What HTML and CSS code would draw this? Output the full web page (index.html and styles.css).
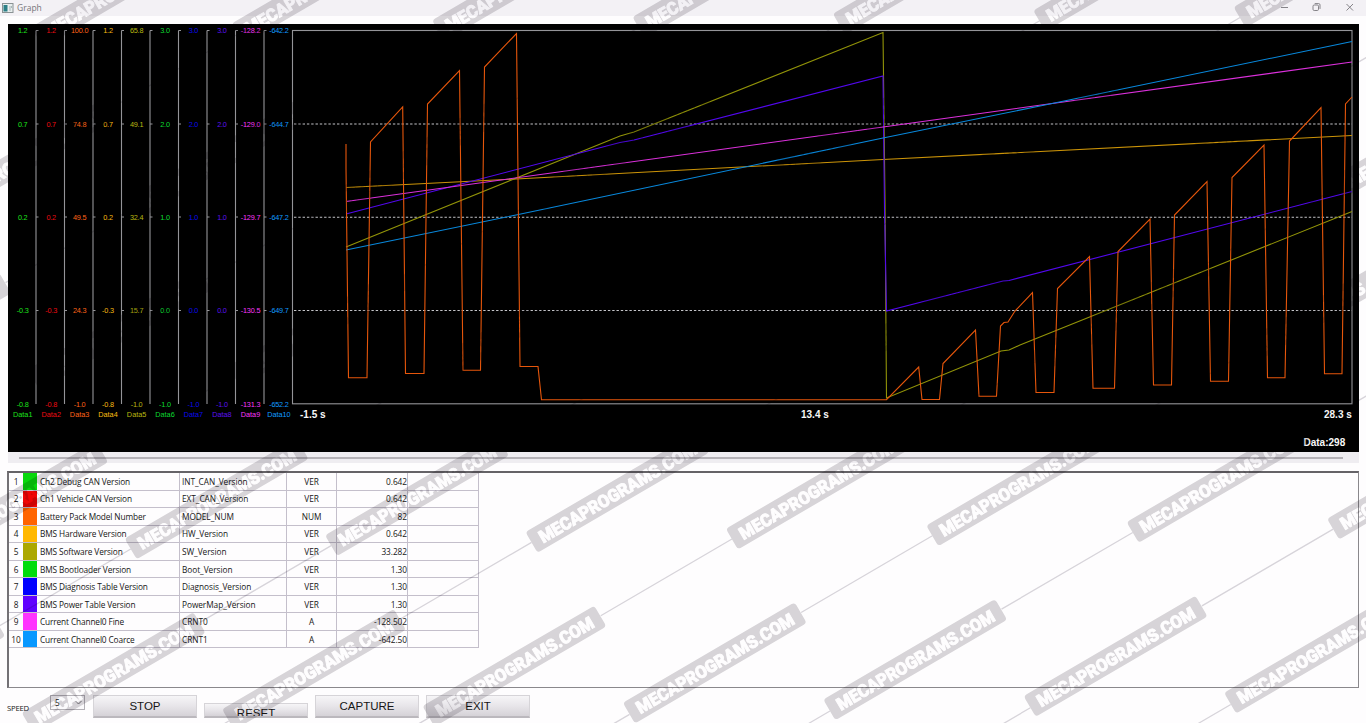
FILE: index.html
```html
<!DOCTYPE html>
<html lang="en">
<head>
<meta charset="utf-8">
<title>Graph</title>
<link rel="stylesheet" href="styles.css">
</head>
<body>
<div class="window">
  <header class="titlebar">
    <svg class="app-icon" width="12" height="11" viewBox="0 0 12 11"><rect x=".5" y=".5" width="10.5" height="9" fill="#e8eeee" stroke="#8a9294"/><rect x="1.5" y="2" width="4" height="6.5" fill="#2c7f86"/><path d="M8 3v5M9.5 3v2" stroke="#a9b8ba"/></svg>
    <span class="title">Graph</span>
    <svg class="controls" width="80" height="14" viewBox="0 0 80 14" fill="none" stroke="#858388"><path d="M0 6.500h7"/><rect x="32" y="4" width="5.5" height="5.5" rx="1.2"/><path d="M33.7 2.600h4q1.3 0 1.3 1.3v4"/><path d="M65.500 3l6.500 6.500M72 3l-6.500 6.500"/></svg>
  </header>

  <svg class="chart" width="1351" height="428" viewBox="8 24 1351 428">
    <g class="axes">
      <path d="M36 30.500V404M64.500 30.500V404M93 30.500V404M121.500 30.500V404M150 30.500V404M178.500 30.500V404M207 30.500V404M235.500 30.500V404M264 30.500V404"/>
      <path class="ticks" d="M36 30.500h2.500M64.500 30.500h2.500M93 30.500h2.500M121.500 30.500h2.500M150 30.500h2.500M178.500 30.500h2.500M207 30.500h2.500M235.500 30.500h2.500M264 30.500h2.500M36 124h2.500M64.500 124h2.500M93 124h2.500M121.500 124h2.500M150 124h2.500M178.500 124h2.500M207 124h2.500M235.500 124h2.500M264 124h2.500M36 217h2.500M64.500 217h2.500M93 217h2.500M121.500 217h2.500M150 217h2.500M178.500 217h2.500M207 217h2.500M235.500 217h2.500M264 217h2.500M36 310.500h2.500M64.500 310.500h2.500M93 310.500h2.500M121.500 310.500h2.500M150 310.500h2.500M178.500 310.500h2.500M207 310.500h2.500M235.500 310.500h2.500M264 310.500h2.500"/>
      <rect x="292.500" y="30.500" width="1059.500" height="373.300"/>
    </g>
    <path class="grid" d="M294 124H1352M294 217.200H1352M294 310.500H1352"/>
    <g class="scale">
      <g class="d1" transform="translate(22.700)"><text y="33">1.2</text><text y="126.500">0.7</text><text y="219.700">0.2</text><text y="313">-0.3</text><text y="406.500">-0.8</text><text class="name" y="417.300">Data1</text></g>
      <g class="d2" transform="translate(51.200)"><text y="33">1.2</text><text y="126.500">0.7</text><text y="219.700">0.2</text><text y="313">-0.3</text><text y="406.500">-0.8</text><text class="name" y="417.300">Data2</text></g>
      <g class="d3" transform="translate(79.600)"><text y="33">100.0</text><text y="126.500">74.8</text><text y="219.700">49.5</text><text y="313">24.3</text><text y="406.500">-1.0</text><text class="name" y="417.300">Data3</text></g>
      <g class="d4" transform="translate(108)"><text y="33">1.2</text><text y="126.500">0.7</text><text y="219.700">0.2</text><text y="313">-0.3</text><text y="406.500">-0.8</text><text class="name" y="417.300">Data4</text></g>
      <g class="d5" transform="translate(136.600)"><text y="33">65.8</text><text y="126.500">49.1</text><text y="219.700">32.4</text><text y="313">15.7</text><text y="406.500">-1.0</text><text class="name" y="417.300">Data5</text></g>
      <g class="d6" transform="translate(165)"><text y="33">3.0</text><text y="126.500">2.0</text><text y="219.700">1.0</text><text y="313">0.0</text><text y="406.500">-1.0</text><text class="name" y="417.300">Data6</text></g>
      <g class="d7" transform="translate(193.400)"><text y="33">3.0</text><text y="126.500">2.0</text><text y="219.700">1.0</text><text y="313">0.0</text><text y="406.500">-1.0</text><text class="name" y="417.300">Data7</text></g>
      <g class="d8" transform="translate(221.900)"><text y="33">3.0</text><text y="126.500">2.0</text><text y="219.700">1.0</text><text y="313">0.0</text><text y="406.500">-1.0</text><text class="name" y="417.300">Data8</text></g>
      <g class="d9" transform="translate(250.500)"><text y="33">-128.2</text><text y="126.500">-129.0</text><text y="219.700">-129.7</text><text y="313">-130.5</text><text y="406.500">-131.3</text><text class="name" y="417.300">Data9</text></g>
      <g class="d10" transform="translate(278.900)"><text y="33">-642.2</text><text y="126.500">-644.7</text><text y="219.700">-647.2</text><text y="313">-649.7</text><text y="406.500">-652.2</text><text class="name" y="417.300">Data10</text></g>
    </g>
    <g class="lines">
      <polyline class="l4" points="346,187.500 516,179 883,159.500 1352,135.500"/>
      <polyline class="l5" points="346,247 620,136 634,132 883,32.500 885,200 886.500,398 1001,351 1009,350 1020,345 1352,211.500"/>
      <polyline class="l8" points="346,214 620,142.500 634,140 883,76 884.500,210 886.500,311 1003,281 1009,280.500 1352,191.500"/>
      <polyline class="l9" points="346,201.500 883,127 1352,62"/>
      <polyline class="l10" points="346,250 516,215 883,138 1040,106 1352,41.500"/>
      <polyline class="l3" points="346,144 346,168 348.500,377.700 367,377.700 370.500,142 402.700,107 405.500,373.500 424,373.500 427.500,104 459.500,70.500 463,370.300 480.500,370.300 484.500,67 516.500,33.500 520,366.500 538,366.500 541.500,399.700 886.500,399.700 918.700,367 922,399.500 939.500,399.500 943,363.500 975.500,330 979,396.300 996.500,396.300 1000.500,326 1004,322.500 1008,322 1015,311 1032.500,292.500 1036,392.500 1054,392.500 1057.500,288.500 1089.500,256.500 1093,388.300 1114.500,388.300 1118,251.500 1150,219 1153.500,385 1171.500,385 1174.500,215 1207,181.500 1210.500,381.300 1228.500,381.300 1232,177.500 1264,145 1267.500,377.700 1285,377.700 1289.500,141 1321,107.500 1324.500,373.700 1342,373.700 1345.500,104 1352,97"/>
    </g>
    <g class="times"><text x="300" y="418">-1.5 s</text><text x="801" y="418">13.4 s</text><text x="1324" y="418">28.3 s</text><text x="1303.500" y="446">Data:298</text></g>
  </svg>

  <div class="splitter"></div>

  <main class="panel">
    <table class="signals">
      <colgroup><col class="c-no"><col class="c-color"><col class="c-name"><col class="c-id"><col class="c-unit"><col class="c-value"><col class="c-last"></colgroup>
      <tr><td>1</td><td class="s1"></td><td>Ch2 Debug CAN Version</td><td>INT_CAN_Version</td><td>VER</td><td>0.642</td><td></td></tr>
      <tr><td>2</td><td class="s2"></td><td>Ch1 Vehicle CAN Version</td><td>EXT_CAN_Version</td><td>VER</td><td>0.642</td><td></td></tr>
      <tr><td>3</td><td class="s3"></td><td>Battery Pack Model Number</td><td>MODEL_NUM</td><td>NUM</td><td>82</td><td></td></tr>
      <tr><td>4</td><td class="s4"></td><td>BMS Hardware Version</td><td>HW_Version</td><td>VER</td><td>0.642</td><td></td></tr>
      <tr><td>5</td><td class="s5"></td><td>BMS Software Version</td><td>SW_Version</td><td>VER</td><td>33.282</td><td></td></tr>
      <tr><td>6</td><td class="s6"></td><td>BMS Bootloader Version</td><td>Boot_Version</td><td>VER</td><td>1.30</td><td></td></tr>
      <tr><td>7</td><td class="s7"></td><td>BMS Diagnosis Table Version</td><td>Diagnosis_Version</td><td>VER</td><td>1.30</td><td></td></tr>
      <tr><td>8</td><td class="s8"></td><td>BMS Power Table Version</td><td>PowerMap_Version</td><td>VER</td><td>1.30</td><td></td></tr>
      <tr><td>9</td><td class="s9"></td><td>Current Channel0 Fine</td><td>CRNT0</td><td>A</td><td>-128.502</td><td></td></tr>
      <tr><td>10</td><td class="s10"></td><td>Current Channel0 Coarce</td><td>CRNT1</td><td>A</td><td>-642.50</td><td></td></tr>
    </table>
  </main>

  <footer class="toolbar">
    <span class="speed">SPEED</span>
    <div class="select"><span>5</span><svg width="7" height="5" viewBox="0 0 7 5" fill="none" stroke="#77747a"><path d="M.5 1l3 3 3-3"/></svg></div>
    <button class="btn">STOP</button>
    <button class="btn low"><span>RESET</span></button>
    <button class="btn">CAPTURE</button>
    <button class="btn">EXIT</button>
  </footer>

  <svg class="watermark" width="1366" height="723" viewBox="0 0 1366 723">
    <defs>
      <g id="mark"><g transform="rotate(-30.300)"><path d="M100 0H252"/><rect x="-99.500" y="-12" width="199" height="24" rx="3.500"/><text x="-90" y="6.800" textLength="180" lengthAdjust="spacingAndGlyphs">MECAPROGRAMS.COM</text></g></g>
      <g id="row"><use href="#mark"/><use href="#mark" x="-200.400" y="3.300"/><use href="#mark" x="-400.800" y="6.600"/><use href="#mark" x="-601.200" y="9.900"/><use href="#mark" x="-801.600" y="13.200"/><use href="#mark" x="-1002" y="16.500"/><use href="#mark" x="-1202.400" y="19.800"/><use href="#mark" x="-1402.800" y="23.100"/></g>
    </defs>
    <use href="#row" x="1526" y="-36"/>
    <use href="#row" x="1425" y="137"/>
    <use href="#row" x="1322" y="310"/>
    <use href="#row" x="1419" y="479"/>
    <use href="#row" x="1316" y="653"/>
    <use href="#row" x="1414" y="825"/>
  </svg>
</div>
</body>
</html>
```

FILE: styles.css
```css
body { margin: 0; background: #fefdfe; overflow: hidden; }
.window { position: relative; width: 1366px; height: 723px; display: flex; flex-direction: column; font-family: "Open Sans", "Noto Sans", sans-serif; color: #161616; overflow: hidden; }
.titlebar { height: 16px; flex: none; margin-bottom: 8px; background: #f3f1f5; display: flex; align-items: center; padding-left: 2px; box-sizing: border-box; }
.title { font-size: 8.5px; color: #77757a; margin-left: 3px; line-height: 16px; }
.controls { margin-left: auto; margin-right: 5px; }
.chart { display: block; flex: none; margin-left: 8px; background: #000; font-family: "Liberation Sans", Arial, sans-serif; }
.axes { fill: none; stroke: #949498; stroke-width: 1.1; }
.grid { stroke: #c4c4c8; stroke-width: 1.1; stroke-dasharray: 2.4 1.9; }
.scale { font-size: 7.3px; text-anchor: middle; letter-spacing: -.2px; }
.scale .name { letter-spacing: 0; }
.lines { fill: none; stroke-width: 1.1; }
.l3 { stroke: #e6560b; } .l4 { stroke: #cc9408; } .l5 { stroke: #929408; }
.l8 { stroke: #5208ee; } .l9 { stroke: #dc30dc; } .l10 { stroke: #0888dc; }
.d1 { fill: #1ce01c; } .d2 { fill: #ec0c12; } .d3 { fill: #ff6418; } .d4 { fill: #f8bc10; } .d5 { fill: #b8b810; }
.d6 { fill: #0cdc30; } .d7 { fill: #0a0aec; } .d8 { fill: #5c10f0; } .d9 { fill: #f838f8; } .d10 { fill: #109cff; }
.times { fill: #f8f8f8; font-size: 10px; font-weight: bold; }
.splitter { height: 11px; flex: none; margin: 0 7px 0 8px; padding: 5px 16px 0 11px; box-sizing: border-box; background: #efedf1; }
.splitter::before { content: ""; display: block; height: 1.5px; background: #b5b2b7; }
.panel { flex: none; width: 1352px; height: 217px; box-sizing: border-box; margin: 8px 0 0 7px; border: 1px solid #8a888c; border-top: 2px solid #656367; border-left: 2px solid #737175; }
.signals { border-collapse: separate; border-spacing: 0; table-layout: fixed; width: 470px; font-size: 8.3px; line-height: 14px; letter-spacing: -.05px; }
.c-no { width: 14px; } .c-color { width: 14px; } .c-name { width: 143px; } .c-id { width: 107px; } .c-unit { width: 50px; } .c-value { width: 71px; } .c-last { width: 71px; }
.signals tr { height: 17.55px; }
.signals td { height: 15.550px; padding: 1px 0 0 2px; border: 0 solid #c4bfcb; border-right-width: 1px; border-bottom-width: 1px; white-space: nowrap; }
.signals td:nth-child(1) { padding: 1px 0 0; text-align: center; border-right: 0; }
.signals td:nth-child(2) { border-right: 0; }
.signals td:nth-child(3) { padding-left: 3px; letter-spacing: -.13px; }
.signals td:nth-child(5) { text-align: center; padding-left: 0; }
.signals td:nth-child(6) { text-align: right; }
.s1 { background: #08d80c; } .s2 { background: #f00404; } .s3 { background: #ff6400; } .s4 { background: #ffb800; } .s5 { background: #aca800; }
.s6 { background: #00dc0c; } .s7 { background: #0000ff; } .s8 { background: #6000ff; } .s9 { background: #ff34ff; } .s10 { background: #0898ff; }
.toolbar { display: flex; align-items: flex-start; padding: 7px 0 0 7px; }
.speed { width: 43px; font-size: 7.7px; letter-spacing: -.2px; line-height: 10px; margin-top: 7.5px; }
.select { width: 35px; height: 15px; box-sizing: border-box; border: 1px solid #b4b1b7; display: flex; justify-content: space-between; align-items: center; padding: 0 2px 0 4px; font-size: 8.3px; background: #fbfafc; margin-right: 8px; }
.btn { width: 104px; height: 23px; box-sizing: border-box; margin: 0 7px 0 0; padding: 0 0 1px; border: 1px solid #d6d4d8; border-bottom: 2px solid #bbb8bd; background: linear-gradient(#f6f5f7, #e9e7eb 45%, #d5d2d7); font: 11.5px "Liberation Sans", Arial, sans-serif; color: #161616; overflow: hidden; }
.btn.low { height: 15px; margin-top: 8px; padding: 0; }
.btn.low span { display: block; height: 8px; line-height: 11px; margin-top: 4px; overflow: hidden; }
.watermark { position: absolute; left: 0; top: 0; mix-blend-mode: multiply; pointer-events: none; }
.watermark rect { fill: #d8d6d9; }
.watermark path { stroke: #d8d6db; stroke-width: 1.3; }
.watermark text { fill: #fff; font: 900 17.5px Roboto, "Open Sans", sans-serif; stroke: #fff; stroke-width: .8; }
```
